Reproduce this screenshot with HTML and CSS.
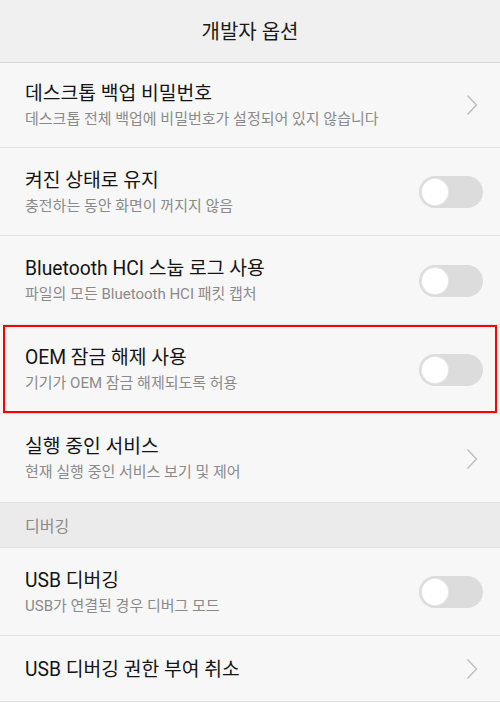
FILE: index.html
```html
<!DOCTYPE html>
<html lang="ko">
<head>
<meta charset="utf-8">
<link rel="stylesheet" href="styles.css">
</head>
<body>
<div class="screen">
  <header class="appbar">개발자 옵션</header>
  <div class="row first">
    <div class="text">
      <div class="title">데스크톱 백업 비밀번호</div>
      <div class="sub">데스크톱 전체 백업에 비밀번호가 설정되어 있지 않습니다</div>
    </div>
    <svg class="chev" width="12" height="22" viewBox="0 0 12 22"><path d="M1.5 1.5 L10.5 11 L1.5 20.5" fill="none" stroke="#bdbdbd" stroke-width="1.4"/></svg>
  </div>
  <div class="row r88">
    <div class="text">
      <div class="title">켜진 상태로 유지</div>
      <div class="sub">충전하는 동안 화면이 꺼지지 않음</div>
    </div>
    <div class="toggle"><span class="knob"></span></div>
  </div>
  <div class="row">
    <div class="text">
      <div class="title">Bluetooth HCI 스눕 로그 사용</div>
      <div class="sub">파일의 모든 Bluetooth HCI 패킷 캡처</div>
    </div>
    <div class="toggle"><span class="knob"></span></div>
  </div>
  <div class="row marked">
    <div class="text">
      <div class="title">OEM 잠금 해제 사용</div>
      <div class="sub">기기가 OEM 잠금 해제되도록 허용</div>
    </div>
    <div class="toggle"><span class="knob"></span></div>
  </div>
  <div class="row">
    <div class="text">
      <div class="title">실행 중인 서비스</div>
      <div class="sub">현재 실행 중인 서비스 보기 및 제어</div>
    </div>
    <svg class="chev" width="12" height="22" viewBox="0 0 12 22"><path d="M1.5 1.5 L10.5 11 L1.5 20.5" fill="none" stroke="#bdbdbd" stroke-width="1.4"/></svg>
  </div>
  <div class="section">디버깅</div>
  <div class="row r88">
    <div class="text">
      <div class="title">USB 디버깅</div>
      <div class="sub">USB가 연결된 경우 디버그 모드</div>
    </div>
    <div class="toggle"><span class="knob"></span></div>
  </div>
  <div class="row last">
    <div class="text">
      <div class="title">USB 디버깅 권한 부여 취소</div>
    </div>
    <svg class="chev" width="12" height="22" viewBox="0 0 12 22"><path d="M1.5 1.5 L10.5 11 L1.5 20.5" fill="none" stroke="#bdbdbd" stroke-width="1.4"/></svg>
  </div>
</div>
</body>
</html>
```
FILE: styles.css
```css
* { box-sizing: border-box; }
html, body { margin: 0; padding: 0; }
body {
  width: 500px;
  height: 702px;
  overflow: hidden;
  background: #f7f7f7;
  font-family: Roboto, "Noto Sans CJK KR", sans-serif;
}
.screen { display: flex; flex-direction: column; }
.appbar {
  height: 63px;
  flex-shrink: 0;
  background: #f0f0f0;
  border-bottom: 1px solid #d9d9d9;
  display: flex;
  align-items: center;
  justify-content: center;
  font-size: 20px;
  color: #1a1a1a;
  padding-bottom: 1px;
}
.row {
  height: 89px;
  flex-shrink: 0;
  display: flex;
  align-items: center;
  justify-content: space-between;
  padding: 1px 17px 0 25px;
  border-bottom: 1px solid #e3e3e3;
  background: #f7f7f7;
}
.row.first { height: 85px; padding-top: 0; }
.row.r88 { height: 88px; }
.row.last { height: 66px; }
.row.marked { position: relative; }
.row.marked::after {
  content: "";
  position: absolute;
  top: 0;
  bottom: 0;
  left: 3px;
  right: 3px;
  border: 2px solid #ff0000;
  pointer-events: none;
}
.text { display: flex; flex-direction: column; gap: 3px; }
.title {
  font-size: 19.3px;
  line-height: 25px;
  color: #141414;
}
.sub {
  font-size: 15px;
  line-height: 21px;
  color: #8a8a8a;
}
.chev { margin-right: 5px; }
.toggle {
  width: 64px;
  height: 32px;
  border-radius: 16px;
  background: #dcdcdc;
  display: flex;
  align-items: center;
  padding-left: 3px;
}
.knob {
  width: 26px;
  height: 26px;
  border-radius: 50%;
  background: #ffffff;
  box-shadow: 0 0 0 1px #e6e6e6;
}
.section {
  height: 45px;
  flex-shrink: 0;
  background: #ebebeb;
  border-bottom: 1px solid #e0e0e0;
  display: flex;
  align-items: center;
  padding-left: 25px;
  font-size: 16px;
  color: #8a8a8a;
}
```
